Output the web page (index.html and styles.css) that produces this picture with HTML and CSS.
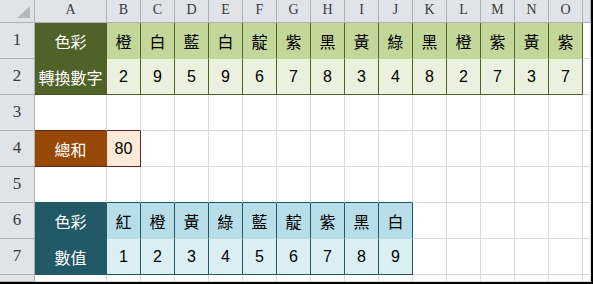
FILE: index.html
```html
<!DOCTYPE html>
<html lang="zh-Hant">
<head>
<meta charset="utf-8">
<link rel="stylesheet" href="styles.css">
</head>
<body>
<div class="sheet">
  <!-- column headers -->
  <div class="h corner"><span class="tri"></span></div>
  <div class="h ch">A</div><div class="h ch">B</div><div class="h ch">C</div><div class="h ch">D</div><div class="h ch">E</div><div class="h ch">F</div><div class="h ch">G</div><div class="h ch">H</div><div class="h ch">I</div><div class="h ch">J</div><div class="h ch">K</div><div class="h ch">L</div><div class="h ch">M</div><div class="h ch">N</div><div class="h ch">O</div><div class="h ch"></div>

  <!-- row 1 -->
  <div class="h rh">1</div>
  <div class="c ga">色彩</div>
  <div class="c g1">橙</div><div class="c g1">白</div><div class="c g1">藍</div><div class="c g1">白</div><div class="c g1">靛</div><div class="c g1">紫</div><div class="c g1">黑</div><div class="c g1">黃</div><div class="c g1">綠</div><div class="c g1">黑</div><div class="c g1">橙</div><div class="c g1">紫</div><div class="c g1">黃</div><div class="c g1">紫</div>
  <div class="c"></div>

  <!-- row 2 -->
  <div class="h rh">2</div>
  <div class="c ga gb">轉換數字</div>
  <div class="c g2">2</div><div class="c g2">9</div><div class="c g2">5</div><div class="c g2">9</div><div class="c g2">6</div><div class="c g2">7</div><div class="c g2">8</div><div class="c g2">3</div><div class="c g2">4</div><div class="c g2">8</div><div class="c g2">2</div><div class="c g2">7</div><div class="c g2">3</div><div class="c g2">7</div>
  <div class="c"></div>

  <!-- row 3 -->
  <div class="h rh">3</div>
  <div class="c stop"></div><div class="c stop"></div>
  <div class="c"></div><div class="c"></div><div class="c"></div><div class="c"></div><div class="c"></div><div class="c"></div><div class="c"></div><div class="c"></div><div class="c"></div><div class="c"></div><div class="c"></div><div class="c"></div><div class="c"></div>
  <div class="c"></div>

  <!-- row 4 -->
  <div class="h rh">4</div>
  <div class="c sa">總和</div><div class="c sb">80</div>
  <div class="c"></div><div class="c"></div><div class="c"></div><div class="c"></div><div class="c"></div><div class="c"></div><div class="c"></div><div class="c"></div><div class="c"></div><div class="c"></div><div class="c"></div><div class="c"></div><div class="c"></div>
  <div class="c"></div>

  <!-- row 5 -->
  <div class="h rh">5</div>
  <div class="c ttop"></div><div class="c ttop"></div><div class="c ttop"></div><div class="c ttop"></div><div class="c ttop"></div><div class="c ttop"></div><div class="c ttop"></div><div class="c ttop"></div><div class="c ttop"></div><div class="c ttop"></div>
  <div class="c"></div><div class="c"></div><div class="c"></div><div class="c"></div><div class="c"></div>
  <div class="c"></div>

  <!-- row 6 -->
  <div class="h rh">6</div>
  <div class="c ta">色彩</div>
  <div class="c t1">紅</div><div class="c t1">橙</div><div class="c t1">黃</div><div class="c t1">綠</div><div class="c t1">藍</div><div class="c t1">靛</div><div class="c t1">紫</div><div class="c t1">黑</div><div class="c t1">白</div>
  <div class="c"></div><div class="c"></div><div class="c"></div><div class="c"></div><div class="c"></div>
  <div class="c"></div>

  <!-- row 7 -->
  <div class="h rh">7</div>
  <div class="c ta">數值</div>
  <div class="c t2">1</div><div class="c t2">2</div><div class="c t2">3</div><div class="c t2">4</div><div class="c t2">5</div><div class="c t2">6</div><div class="c t2">7</div><div class="c t2">8</div><div class="c t2">9</div>
  <div class="c"></div><div class="c"></div><div class="c"></div><div class="c"></div><div class="c"></div>
  <div class="c"></div>

  <!-- row 8 (partial) -->
  <div class="h rh"></div>
  <div class="c"></div><div class="c"></div><div class="c"></div><div class="c"></div><div class="c"></div><div class="c"></div><div class="c"></div><div class="c"></div><div class="c"></div><div class="c"></div><div class="c"></div><div class="c"></div><div class="c"></div><div class="c"></div><div class="c"></div>
  <div class="c"></div>
</div>
</body>
</html>
```

FILE: styles.css
```css
html, body {
  margin: 0;
  padding: 0;
  background: #ffffff;
}

.sheet {
  box-sizing: border-box;
  width: 593px;
  height: 284px;
  border-right: 2px solid #000000;
  border-bottom: 2px solid #000000;
  display: grid;
  grid-template-columns: 35px 72px repeat(14, 34px) 8px;
  grid-template-rows: 23px repeat(7, 36px) 7px;
  overflow: hidden;
  background: #ffffff;
}

.sheet > div {
  box-sizing: border-box;
  display: flex;
  align-items: center;
  justify-content: center;
  overflow: hidden;
  white-space: nowrap;
}

.c {
  border-right: 1px solid #d9d9d9;
  border-bottom: 1px solid #d9d9d9;
  font-family: "Liberation Sans", "Noto Sans CJK TC", sans-serif;
  font-size: 16px;
  color: #000000;
}

.h {
  background: #e0e3e8;
  border-right: 1px solid #aeb1b6;
  border-bottom: 1px solid #aeb1b6;
  font-family: "Liberation Serif", serif;
  color: #3a3a3a;
}

.ch {
  font-size: 14px;
  align-items: flex-end;
  padding-bottom: 3px;
}

.rh {
  font-size: 17px;
  align-items: flex-end;
  padding-bottom: 1px;
}

.corner {
  position: relative;
}

.tri {
  position: absolute;
  right: 4px;
  bottom: 4px;
  width: 13px;
  height: 12px;
  background: #b5b8bd;
  clip-path: polygon(100% 0, 100% 100%, 0 100%);
}

/* green table */
.ga {
  background: #4f6228;
  color: #ffffff;
  border-right-color: #4f6228;
  border-bottom-color: #4f6228;
}
.gb {
  border-bottom-color: #3f4f1f;
}
.g1 {
  background: #c4d79b;
  border-right-color: #4f6228;
  border-bottom-color: #c4d79b;
}
.g2 {
  background: #ebf1de;
  border-right-color: #4f6228;
  border-bottom-color: #4f6228;
}

/* sum box */
.stop {
  border-bottom-color: #632523;
}
.sa {
  background: #974706;
  color: #ffffff;
  border-right-color: #974706;
  border-bottom-color: #632523;
}
.sb {
  background: #fde9d9;
  border-right-color: #632523;
  border-bottom-color: #632523;
}

/* teal table */
.ttop {
  border-bottom-color: #215967;
}
.ta {
  background: #215967;
  color: #ffffff;
  border-right-color: #215967;
  border-bottom-color: #215967;
}
.t1 {
  background: #b7dee8;
  border-right-color: #215967;
  border-bottom-color: #b7dee8;
}
.t2 {
  background: #daeef3;
  border-right-color: #215967;
  border-bottom-color: #215967;
}
```
